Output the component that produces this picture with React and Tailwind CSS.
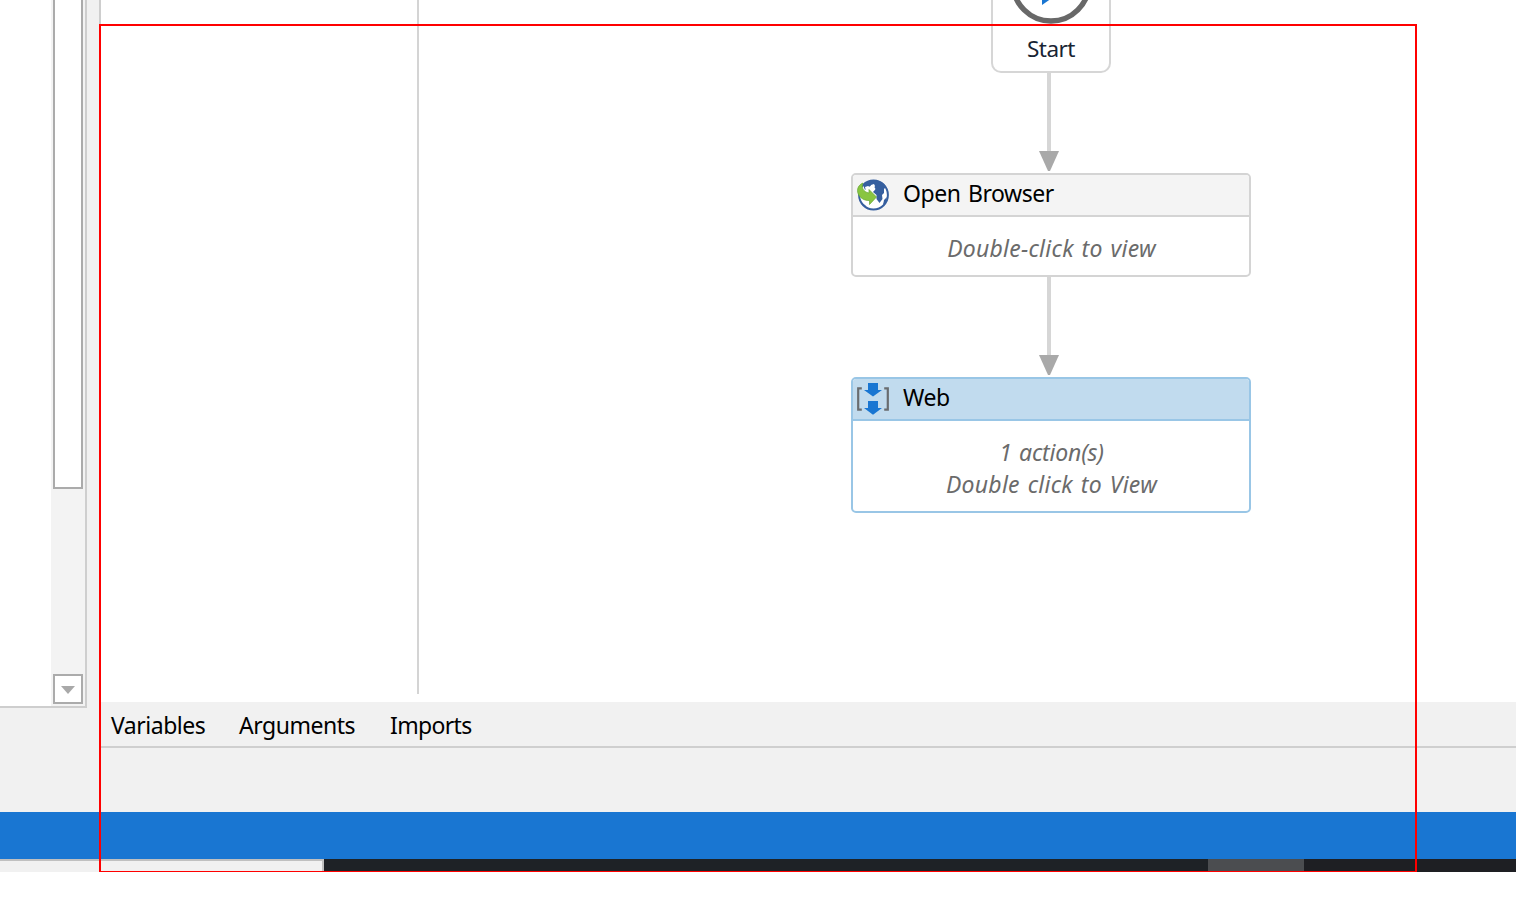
const labelFont = "font-['Noto_Sans','Noto_Sans_CJK_KR',sans-serif] whitespace-nowrap";

function GlobeIcon() {
  return (
    <svg viewBox="0 0 34 34" className="h-[34px] w-[34px] shrink-0">
      <circle cx="17.500" cy="17" r="14.400" fill="#fff" stroke="#365f9f" strokeWidth="2" />
      <path d="M7 7C11 1 22 0 28 6L30 9L28 11V15L26 17L26.500 21L23.500 25L20.500 21V17L17 14L19.500 11L17 7L13 9L9 12Z" fill="#365f9f" />
      <path d="M9 9l3-1 2 1 1-2 3-1 1 2-1 2 1 2-3 1-2-1-2 2-2-1z" fill="#fff" />
      <path d="M28 22l3-3-1 5-3 3z" fill="#365f9f" />
      <path d="M5 25L9 27L12 31C8 29 6 27 5 25Z" fill="#365f9f" />
      <path d="M7 5C5 9 7 14 13 15V11.500L20.500 19L13.500 26.500V22.500C7 23 1.500 18 1.500 12.500C1.500 9 4 6 7 5Z" fill="#89c540" stroke="#65a832" strokeWidth="0.700" />
    </svg>
  );
}

function SequenceIcon() {
  return (
    <svg viewBox="0 0 34 34" className="h-[34px] w-[34px] shrink-0">
      <path d="M5.800 6.300H2.200V27.600H5.800M28.200 6.300H31.800V27.600H28.200" fill="none" stroke="#696c6f" strokeWidth="2.200" />
      <path d="M12 1H22V8H26L17 14.500L8 8H12Z M12 19H22V26H26L17 32.700L8 26H12Z" fill="#1976d2" />
    </svg>
  );
}

function Connector() {
  return (
    <svg viewBox="0 0 20 100" className="-ml-1 h-[100px] w-5 shrink-0">
      <path d="M8 0H12V78H8Z" fill="#d6d6d6" />
      <path d="M0 78H20L11 98H9Z" fill="#a9a9a9" />
    </svg>
  );
}

function Activity({ title, icon, selected, children }) {
  return (
    <section className={selected
      ? "h-[136px] w-[400px] shrink-0 overflow-hidden rounded-[5px] border-2 border-[#99c6e6] bg-white"
      : "h-[104px] w-[400px] shrink-0 overflow-hidden rounded-[5px] border-2 border-[#d4d4d4] bg-white"}>
      <header className={selected
        ? "flex h-[42px] items-center border-b-2 border-[#99c6e6] bg-[#c1dbee] pl-[3px]"
        : "flex h-[42px] items-center border-b-2 border-[#d4d4d4] bg-[#f4f4f4] pl-[3px]"}>
        {icon}
        <h2 className={`${labelFont} ml-[13px] -mt-1 text-[23px] leading-8 tracking-[-0.45px] [word-spacing:2px] text-black`}>{title}</h2>
      </header>
      <div className={`${labelFont} pt-[15px] pl-[1px] text-center text-[23px] italic leading-8 tracking-[0.25px] [word-spacing:1.6px] text-[#6b6b6b]`}>{children}</div>
    </section>
  );
}

function ScrollPane() {
  return (
    <aside className="flex h-[708px] w-[87px] border-r-2 border-b-2 border-[#cecece] bg-white">
      <div className="w-[51px]" />
      <div className="flex w-[34px] flex-col items-center justify-between bg-[#f3f3f3] pb-[2px]">
        <div className="h-[489px] w-[30px] border-2 border-t-0 border-[#ababab] bg-white" />
        <button className="flex h-[30px] w-[30px] items-center justify-center border-2 border-[#ababab] bg-white">
          <svg viewBox="0 0 14 8" className="mt-0.5 h-2 w-3.5"><path d="M0 0H14L7 8Z" fill="#a9a9a9" /></svg>
        </button>
      </div>
    </aside>
  );
}

export default function App() {
  return (
    <main className="relative h-[897px] w-[1516px] overflow-hidden bg-white">
      <div className="flex h-[812px] bg-[#f1f1f1]">
        <div className="w-[99px] shrink-0"><ScrollPane /></div>
        <div className="flex flex-1 flex-col border-l-2 border-[#cecece]">
          <div className="flex h-[702px] bg-white">
            <div className="h-[694px] w-[318px] shrink-0 border-r-2 border-[#d4d4d4]" />
            <div className="ml-[432px] flex w-[400px] flex-col items-center">
              <section className="flex h-[73px] w-[120px] shrink-0 flex-col items-center overflow-hidden rounded-b-[10px] border-2 border-t-0 border-[#d6d6d6]">
                <svg viewBox="0 0 84 24" className="h-6 w-[84px] shrink-0">
                  <circle cx="42" cy="-17" r="38" fill="#fff" stroke="#686868" strokeWidth="5.400" />
                  <path d="M33 -40V5L66 -18Z" fill="#1976d2" />
                </svg>
                <span className={`${labelFont} mt-[9px] text-[22.5px] leading-8 tracking-[-0.5px] text-[#182433]`}>Start</span>
              </section>
              <Connector />
              <Activity title="Open Browser" icon={<GlobeIcon />}>
                <p>Double-click to view</p>
              </Activity>
              <Connector />
              <Activity title="Web" icon={<SequenceIcon />} selected>
                <p className="tracking-[-0.2px]">1 action(s)</p>
                <p>Double click to View</p>
              </Activity>
            </div>
          </div>
          <nav className={`${labelFont} flex h-[46px] border-b-2 border-[#cfcfcf] pl-[10px] text-[23px] leading-[47px] tracking-[-0.48px] text-black`}>
            <span className="w-[128px]">Variables</span>
            <span className="w-[151px]">Arguments</span>
            <span className="tracking-[-0.65px]">Imports</span>
          </nav>
        </div>
      </div>
      <div className="h-[47px] bg-[#1976d2]" />
      <footer className="flex h-[13px] bg-[#1e1f23]">
        <div className="w-[324px] border-t-2 border-r-2 border-[#c0c0c0] bg-[#f1f1f1]" />
        <div className="w-[884px] bg-[#1e2226]" />
        <div className="w-24 bg-[#4b4d50]" />
      </footer>
      <div className="pointer-events-none absolute left-[99px] top-[24px] h-[848px] w-[1318px] border-2 border-b border-[#f00]" />
    </main>
  );
}
